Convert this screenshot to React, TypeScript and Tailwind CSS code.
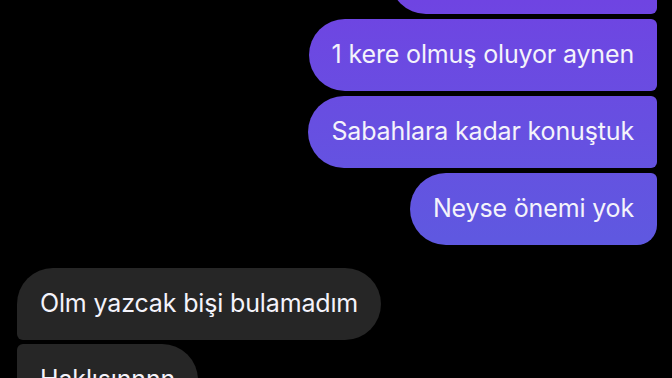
import React from "react";

type Msg = { text: string; mine: boolean; shape: string; width?: string };

const messages: Msg[] = [
  { text: "", mine: true, shape: "rounded-l-[36px] rounded-r-[6px]", width: "w-[267px]" },
  { text: "1 kere olmuş oluyor aynen", mine: true, shape: "rounded-l-[36px] rounded-r-[6px]" },
  { text: "Sabahlara kadar konuştuk", mine: true, shape: "rounded-l-[36px] rounded-r-[6px]" },
  { text: "Neyse önemi yok", mine: true, shape: "rounded-l-[36px] rounded-tr-[6px] rounded-br-[20px]" },
];

const Bubble = ({ text, mine, shape, width }: Msg) => (
  <div
    className={`h-[72px] ${width ?? ""} flex items-center px-[23px] text-[25px] tracking-[-0.15px] text-[#f4f3fb] whitespace-nowrap ${shape} ${
      mine ? "bg-fixed bg-linear-to-b from-[#6f44e2] to-[#5362df]" : "bg-[#262626]"
    }`}
  >
    {text}
  </div>
);

export default function App() {
  return (
    <div
      className="w-[672px] h-[378px] overflow-hidden bg-black"
      style={{ fontFamily: "Inter, 'Noto Sans', sans-serif" }}
    >
      <div className="flex flex-col items-end gap-[5px] pr-[15px] -mt-[58px]">
        {messages.map((m, i) => (
          <Bubble key={i} {...m} />
        ))}
      </div>
      <div className="flex flex-col items-start gap-[4px] pl-[17px] mt-[23px]">
        <Bubble text="Olm yazcak bişi bulamadım" mine={false} shape="rounded-[36px] rounded-bl-[6px]" />
        <Bubble text="Haklısınnnn" mine={false} shape="rounded-[36px] rounded-tl-[6px]" />
      </div>
    </div>
  );
}
